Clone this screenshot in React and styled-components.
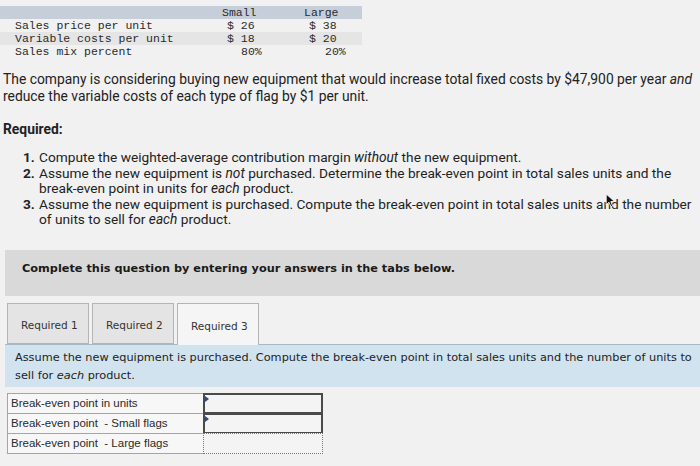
import React from "react";
import styled, { createGlobalStyle } from "styled-components";

const GlobalStyle = createGlobalStyle`
  html, body {
    margin: 0;
    padding: 0;
    background: #f1f1f1;
  }
`;

const rows = [
  { label: "Sales price per unit", small: "$ 26", large: "$ 38" },
  { label: "Variable costs per unit", small: "$ 18", large: "$ 20", shade: true },
  { label: "Sales mix percent", small: "80%", large: "20%", pct: true },
];

const answers = [
  { label: "Break-even point in units", kind: "solid" },
  { label: "Break-even point  - Small flags", kind: "solid" },
  { label: "Break-even point  - Large flags", kind: "dotted" },
];

export default function App() {
  return (
    <Page>
      <GlobalStyle />
      <DataTable>
        <HeadRow>
          <Cell />
          <Cell $pad={7}>Small</Cell>
          <Cell $pad={7}>Large</Cell>
        </HeadRow>
        {rows.map((r) => (
          <DataRow key={r.label} $shade={r.shade}>
            <Cell $pad={15}>{r.label}</Cell>
            <Cell $pad={r.pct ? 26 : 12}>{r.small}</Cell>
            <Cell $pad={r.pct ? 28 : 12}>{r.large}</Cell>
          </DataRow>
        ))}
      </DataTable>

      <Para>
        The company is considering buying new equipment that would increase
        total fixed costs by $47,900 per year <em>and</em> reduce the variable
        costs of each type of flag by $1 per unit.
      </Para>

      <Heading>Required:</Heading>

      <List>
        <Item>
          <Num>1.</Num>
          <span>
            Compute the weighted-average contribution margin <em>without</em>{" "}
            the new equipment.
          </span>
        </Item>
        <Item>
          <Num>2.</Num>
          <span>
            Assume the new equipment is <em>not</em> purchased. Determine the{" "}
            <NoWrap>break-even</NoWrap> point in total sales units and the{" "}
            <NoWrap>break-even</NoWrap> point in units for <em>each</em> product.
          </span>
        </Item>
        <Item>
          <Num>3.</Num>
          <span>
            Assume the new equipment is purchased. Compute the{" "}
            <NoWrap>break-even</NoWrap> point in total sales units and the
            number of units to sell for <em>each</em> product.
          </span>
          <Cursor viewBox="0 0 10 14">
            <path d="M1 1 L1 11 L3.6 8.6 L5.4 12.8 L7 12.1 L5.3 8 L8.8 8 Z" fill="#111" stroke="#fff" strokeWidth="0.8" />
          </Cursor>
        </Item>
      </List>

      <Band>Complete this question by entering your answers in the tabs below.</Band>

      <TabBar>
        <Tab>Required 1</Tab>
        <Tab>Required 2</Tab>
        <Tab $active>Required 3</Tab>
      </TabBar>

      <Prompt>
        Assume the new equipment is purchased. Compute the break-even point in
        total sales units and the number of units to sell for <em>each</em>{" "}
        product.
      </Prompt>

      <AnswerTable>
        {answers.map((a) => (
          <AnswerRow key={a.label}>
            <AnswerLabel>{a.label}</AnswerLabel>
            <AnswerInput $kind={a.kind} />
          </AnswerRow>
        ))}
      </AnswerTable>
    </Page>
  );
}

const Page = styled.div`
  width: 700px;
  height: 466px;
  overflow: hidden;
  background: #f1f1f1;
  color: #222;
  font-family: Roboto, "Liberation Sans", sans-serif;
`;

const DataTable = styled.div`
  width: 362px;
  padding-top: 6px;
  font-family: "Liberation Mono", monospace;
  font-size: 11.5px;
  color: #2a2a2a;
`;

const HeadRow = styled.div`
  display: grid;
  grid-template-columns: 215px 82px 65px;
  height: 13px;
  line-height: 13px;
  background: #c6ceda;
`;

const DataRow = styled.div`
  display: grid;
  grid-template-columns: 215px 82px 65px;
  height: 13px;
  line-height: 13px;
  background: ${(p) => (p.$shade ? "#e5e5e5" : "transparent")};
`;

const Cell = styled.div`
  padding-left: ${(p) => p.$pad || 0}px;
  white-space: pre;
`;

const NoWrap = styled.span`
  white-space: nowrap;
`;

const Para = styled.p`
  margin: 13px 0 0;
  padding-left: 3px;
  font-size: 13.85px;
  line-height: 17px;
`;

const Heading = styled.h3`
  margin: 16px 0 0;
  padding-left: 3px;
  font-size: 13.85px;
  line-height: 17px;
  font-weight: 700;
`;

const List = styled.div`
  margin-top: 12px;
  width: 702px;
  display: flex;
  flex-direction: column;
  font-size: 13.7px;
  line-height: 15.5px;
`;

const Item = styled.div`
  position: relative;
  display: flex;
  padding-left: 23px;
`;

const Num = styled.span`
  flex: 0 0 16px;
  font-weight: 700;
`;

const Cursor = styled.svg`
  position: absolute;
  left: 605px;
  top: -4px;
  width: 11px;
  height: 15px;
`;

const Band = styled.div`
  margin: 22px 0 0 5px;
  height: 46px;
  box-sizing: border-box;
  padding: 11px 0 0 17px;
  background: #d9d9d9;
  font-family: "DejaVu Sans", Verdana, sans-serif;
  font-size: 11.3px;
  line-height: 16px;
  font-weight: 700;
  color: #1a1a1a;
`;

const TabBar = styled.div`
  display: flex;
  gap: 3px;
  padding: 7px 0 0 7px;
  height: 48px;
  box-sizing: border-box;
`;

const Tab = styled.div`
  width: 82px;
  box-sizing: border-box;
  display: flex;
  align-items: center;
  padding: 3px 0 0 13px;
  margin-bottom: ${(p) => (p.$active ? "-1px" : "0")};
  position: relative;
  z-index: 1;
  border: 1px solid #b4b4b4;
  border-bottom: ${(p) => (p.$active ? "none" : "1px solid #b4b4b4")};
  background: ${(p) => (p.$active ? "#f5f5f5" : "#e4e4e4")};
  font-family: "DejaVu Sans", Verdana, sans-serif;
  font-size: 10.5px;
  color: #333;
`;

const Prompt = styled.div`
  margin-left: 5px;
  height: 43px;
  box-sizing: border-box;
  padding: 4px 0 0 10px;
  border-top: 1px solid #a8b8c4;
  background: #d1e3ef;
  font-family: "DejaVu Sans", Verdana, sans-serif;
  font-size: 11.3px;
  line-height: 18px;
  color: #222;
`;

const AnswerTable = styled.div`
  margin: 6px 0 0 7px;
  width: 316px;
  display: flex;
  flex-direction: column;
  font-family: "Liberation Sans", Arial, sans-serif;
  font-size: 11.5px;
  color: #2a2a2a;
`;

const AnswerRow = styled.div`
  display: grid;
  grid-template-columns: 197px 119px;
  height: 21px;
  & + & {
    margin-top: -1px;
  }
`;

const AnswerLabel = styled.div`
  border: 1px solid #a5a5a5;
  background: #f7f7f7;
  padding-left: 3px;
  display: flex;
  align-items: center;
  white-space: pre;
`;

const AnswerInput = styled.div`
  position: relative;
  margin-left: -1px;
  background: #f4f4f4;
  border: ${(p) => (p.$kind === "dotted" ? "1px dotted #777" : "2px solid #4a4a4a")};
  &::before {
    content: "";
    display: ${(p) => (p.$kind === "dotted" ? "none" : "block")};
    position: absolute;
    left: 0;
    top: 1px;
    border-left: 4px solid #2b4a8a;
    border-top: 3px solid transparent;
    border-bottom: 3px solid transparent;
  }
`;
